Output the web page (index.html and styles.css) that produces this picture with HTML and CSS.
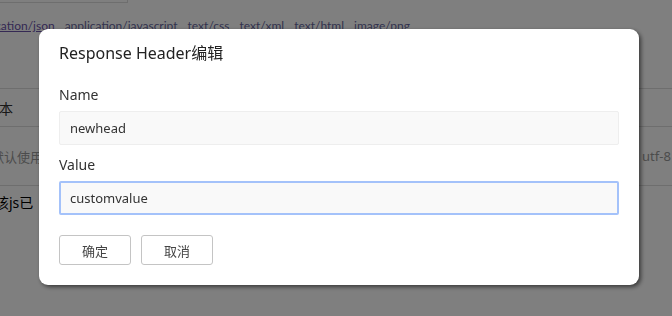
FILE: index.html
```html
<!DOCTYPE html>
<html lang="en">
  <head>
    <meta charset="UTF-8" />
    <meta name="viewport" content="width=device-width, initial-scale=1.0" />
    <title>Response Header</title>
    <link rel="stylesheet" href="styles.css">
  </head>
  <body>

    <!-- page behind the dialog, scrolled a bit to the right -->
    <div class="page">
      <div class="search-box"></div>
      <div class="type-links">
        <a class="visited" href="#">application/json</a>
        <a href="#">application/javascript</a>
        <a href="#">text/css</a>
        <a href="#">text/xml</a>
        <a href="#">text/html</a>
        <a href="#">image/png</a>
      </div>
      <table class="rule-table">
        <thead>
          <tr>
            <th class="col-text">文本</th>
            <th></th>
            <th></th>
          </tr>
        </thead>
        <tbody>
          <tr>
            <td class="col-text muted">默认使用</td>
            <td></td>
            <td class="muted col-charset">utf-8</td>
          </tr>
        </tbody>
      </table>
      <p class="note">该js已</p>
    </div>

    <div class="mask">
      <div class="dialog">
        <h2 class="dialog-title">Response Header编辑</h2>
        <form id="headerForm" class="dialog-form">
          <label for="name">Name</label>
          <input type="text" id="name" name="name" value="newhead" />

          <label for="value">Value</label>
          <input class="focused" type="text" id="value" name="value" value="customvalue" />

          <div class="dialog-buttons">
            <button type="button">确定</button>
            <button type="button">取消</button>
          </div>
        </form>
      </div>
    </div>
  </body>
</html>
```

FILE: styles.css
```css
/* Response header edit dialog over the rules page */
      body {
        font-family: "Noto Sans", "Noto Sans CJK SC", sans-serif;
        background-color: #fff;
        color: #333;
        margin: 0;
        overflow: hidden;
      }

      .page {
        margin-left: -32px;
        width: 740px;
      }

      .search-box {
        width: 158px;
        height: 2px;
        border: 1px solid #ddd;
        border-top: none;
      }

      .type-links {
        display: flex;
        gap: 10px;
        margin-top: 13px;
        margin-left: 2px;
        font-family: Lato, "Noto Sans", sans-serif;
        font-size: 12px;
        line-height: 20px;
      }

      .type-links a {
        color: #66669c;
        text-decoration: none;
      }

      .type-links a.visited {
        color: #6a52a8;
        text-decoration: underline;
      }

      .rule-table {
        width: 100%;
        border-collapse: collapse;
        margin-top: 52px;
        font-size: 14px;
      }

      .rule-table th,
      .rule-table td {
        border-top: 1px solid #ddd;
        border-bottom: 1px solid #ddd;
        text-align: left;
        font-weight: normal;
        padding: 0;
      }

      .rule-table th {
        height: 37px;
      }

      .rule-table td {
        height: 58px;
      }

      .col-text {
        width: 80px;
        padding-left: 17px !important;
      }

      .rule-table td.col-text {
        padding-left: 23px !important;
      }

      .col-charset {
        width: 66px;
      }

      .muted {
        color: #999;
        font-size: 13px;
      }

      .note {
        margin: 6px 0 0 27px;
        font-size: 14px;
        color: #000;
      }

      .mask {
        position: fixed;
        top: 0;
        left: 0;
        right: 0;
        bottom: 0;
        background-color: rgba(0, 0, 0, 0.5);
        padding: 29px 0 0 39px;
      }

      .dialog {
        width: 560px;
        background-color: #fff;
        border-radius: 9px;
        padding: 12px 20px 20px;
        box-shadow: 2px 2px 4px rgba(0, 0, 0, 0.55);
      }

      .dialog-title {
        margin: 0;
        font-size: 16px;
        font-weight: normal;
        line-height: 24px;
        color: #222;
      }

      .dialog-form {
        display: flex;
        flex-direction: column;
        margin-top: 19px;
      }

      label {
        font-size: 14px;
        line-height: 21px;
        margin-bottom: 6px;
        color: #333;
      }

      input {
        box-sizing: border-box;
        height: 34px;
        width: 100%;
        padding: 0 10px;
        border: 1px solid #eee;
        border-radius: 2px;
        background-color: #f9f9f9;
        font-family: inherit;
        font-size: 13px;
        color: #333;
        margin-bottom: 9px;
      }

      input.focused {
        border: 2px solid #a4c2fa;
        padding: 0 9px;
        outline: none;
        margin-bottom: 0;
      }

      .dialog-buttons {
        display: flex;
        gap: 10px;
        margin-top: 20px;
      }

      button {
        width: 72px;
        height: 30px;
        background-color: #fff;
        border: 1px solid #c4c4c4;
        border-radius: 3px;
        font-family: inherit;
        font-size: 13px;
        color: #444;
        cursor: pointer;
      }

      button:hover {
        border-color: #999;
      }
```
